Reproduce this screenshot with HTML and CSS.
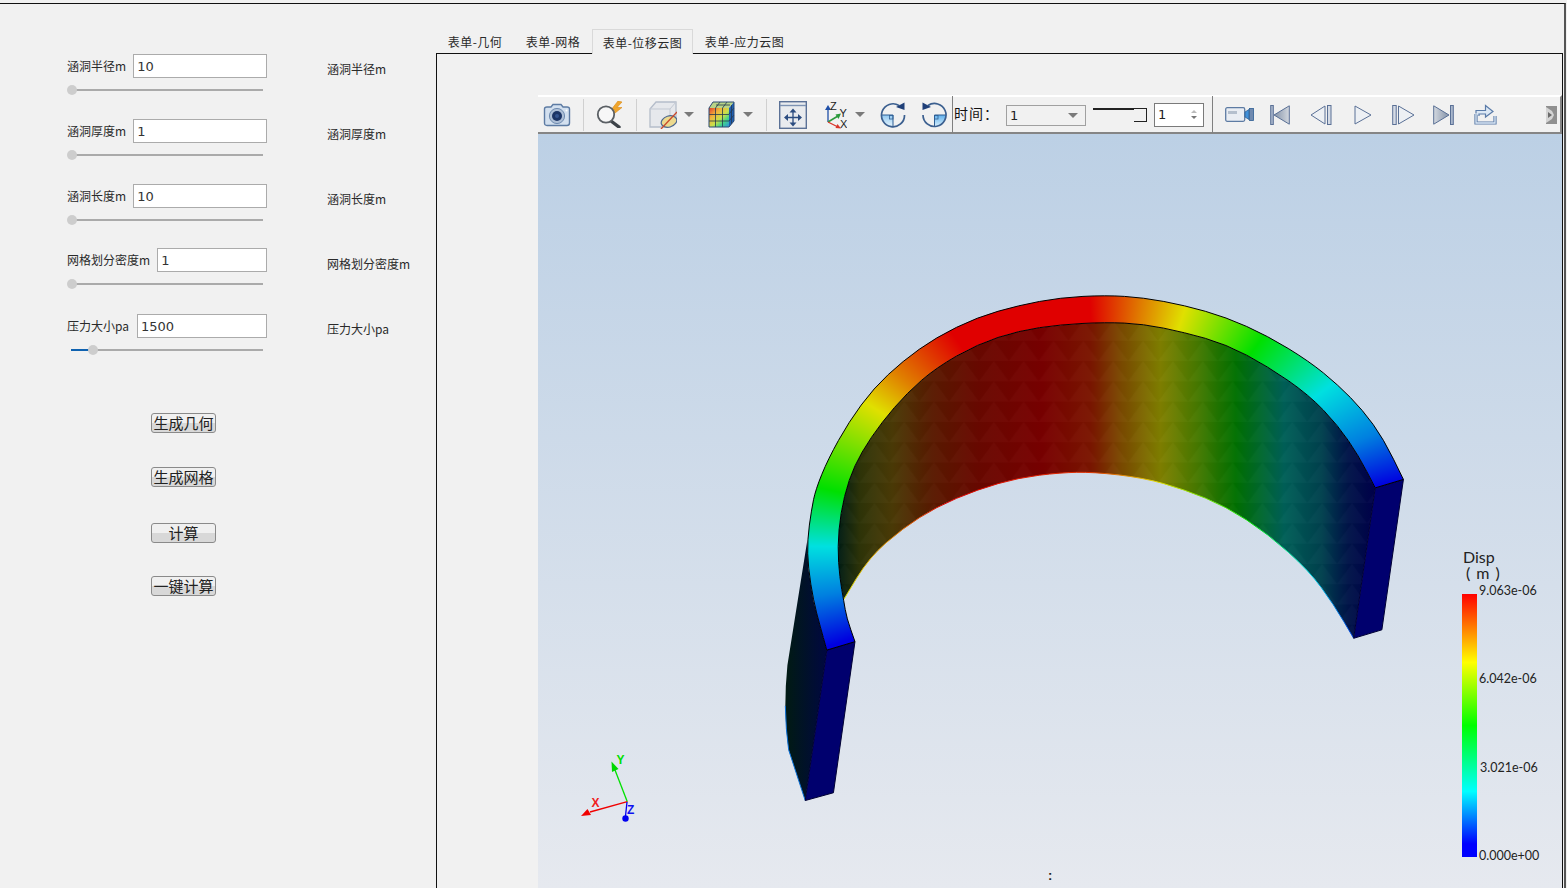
FILE: index.html
```html
<!DOCTYPE html>
<html lang="zh-CN">
<head>
<meta charset="utf-8">
<title>表单</title>
<link rel="stylesheet" href="styles.css">
</head>
<body>
<div class="window">
  <aside class="side">
    <div class="form">
      <div class="field">
        <div class="field-row"><label class="lbl">涵洞半径m</label><div class="input">10</div></div>
        <div class="slider"><span class="handle"></span></div>
      </div>
      <div class="field">
        <div class="field-row"><label class="lbl">涵洞厚度m</label><div class="input">1</div></div>
        <div class="slider"><span class="handle"></span></div>
      </div>
      <div class="field field-short">
        <div class="field-row"><label class="lbl">涵洞长度m</label><div class="input">10</div></div>
        <div class="slider"><span class="handle"></span></div>
      </div>
      <div class="field field-tall">
        <div class="field-row"><label class="lbl">网格划分密度m</label><div class="input">1</div></div>
        <div class="slider"><span class="handle"></span></div>
      </div>
      <div class="field field-last">
        <div class="field-row"><label class="lbl">压力大小pa</label><div class="input input-wide-gap">1500</div></div>
        <div class="slider slider-value"><span class="fill"></span><span class="handle handle-value"></span></div>
      </div>
      <div class="actions">
        <button class="btn">生成几何</button>
        <button class="btn btn-b">生成网格</button>
        <button class="btn btn-c">计算</button>
        <button class="btn btn-d">一键计算</button>
      </div>
    </div>
    <div class="echo">
      <div class="echo-item">涵洞半径m</div>
      <div class="echo-item">涵洞厚度m</div>
      <div class="echo-item">涵洞长度m</div>
      <div class="echo-item">网格划分密度m</div>
      <div class="echo-item">压力大小pa</div>
    </div>
  </aside>

  <main class="main">
    <nav class="tabs">
      <div class="tab">表单-几何</div>
      <div class="tab">表单-网格</div>
      <div class="tab tab-active">表单-位移云图</div>
      <div class="tab tab-wide">表单-应力云图</div>
    </nav>
    <section class="pane">
      <div class="toolbar">
        <svg class="t-camera" width="28" height="24" viewBox="0 0 28 24">
          <path d="M1.5 6Q1.5 4 4 4H8L10 1.5H18L20 4H24Q26.5 4 26.5 6V20Q26.5 22.5 24 22.5H4Q1.5 22.5 1.5 20Z" fill="#d3e0ef" stroke="#5d7ba3" stroke-width="1.4"/>
          <circle cx="14" cy="13" r="7.6" fill="#aebfd6" stroke="#6f8bb0"/>
          <circle cx="14" cy="13" r="5" fill="#1c3566"/>
          <circle cx="14" cy="13" r="2" fill="#34548f"/>
          <circle cx="23.5" cy="7.5" r="1" fill="#fff"/>
        </svg>
        <span class="sep s-a"></span>
        <svg class="t-mag" width="29" height="27" viewBox="0 0 29 27">
          <path d="M22 0L15 9H19L16.5 14L26 6.500H21L26 1Z" fill="#f0a52c" stroke="#d98a18" stroke-width=".6"/>
          <line x1="15" y1="20" x2="23" y2="26" stroke="#3c4248" stroke-width="3.4" stroke-linecap="round"/>
          <circle cx="10" cy="13.500" r="8.200" fill="#f7f7f7" stroke="#5a5f64" stroke-width="1.800"/>
        </svg>
        <span class="sep s-b"></span>
        <svg class="t-box" width="28" height="28" viewBox="0 0 28 28">
          <path d="M1 8L7 1H27V19L21 26H1Z" fill="#e6e8ec" stroke="#b5bdca" stroke-width="1.300"/>
          <path d="M1 8H21V26M21 8L27 1" fill="none" stroke="#c3c9d3" stroke-width="1"/>
          <ellipse cx="20" cy="20.500" rx="8" ry="5.500" transform="rotate(-18 20 20.500)" fill="#ecd98e" stroke="#4d6890" stroke-width="1.200"/>
          <line x1="12" y1="28" x2="28" y2="11" stroke="#c8492d" stroke-width="1.300"/>
        </svg>
        <span class="caret c-a"></span>
        <svg class="t-cube" width="27" height="27" viewBox="0 0 27 27">
          <defs>
            <linearGradient id="cubeFront" x1="0" y1="0" x2="1" y2="1">
              <stop offset="0" stop-color="#e03b2e"/><stop offset=".3" stop-color="#f2b33a"/><stop offset=".55" stop-color="#c9e04a"/><stop offset=".75" stop-color="#42d48a"/><stop offset="1" stop-color="#2f8fe0"/>
            </linearGradient>
          </defs>
          <path d="M5 1H26L21 7H1Z" fill="#b9d487"/>
          <path d="M21 7L26 1V20L21 26Z" fill="#1f5fb0"/>
          <rect x="1" y="7" width="20" height="19" fill="url(#cubeFront)"/>
          <path d="M7.500 7V26M14.500 7V26M1 13.500H21M1 20H21M8 4H22M12 1L7.500 7M19 1L14.500 7M23.500 4V23M21 13L26 7M21 20L26 14" stroke="#24384f" stroke-width=".8" fill="none"/>
          <path d="M5 1H26V20L21 26H1V7Z" fill="none" stroke="#2c4a72" stroke-width="1"/>
        </svg>
        <span class="caret c-b"></span>
        <span class="sep s-c"></span>
        <svg class="t-reset" width="28" height="28" viewBox="0 0 28 28">
          <rect x=".7" y=".7" width="26.600" height="26.600" fill="#e9ebee" stroke="#5b7196" stroke-width="1.400"/>
          <line x1="1" y1="4.500" x2="27" y2="4.500" stroke="#7d92b3" stroke-width="1.400"/>
          <path d="M7.500 16.500H20.500M14 10V23" stroke="#2b4c80" stroke-width="1.300" fill="none"/>
          <path d="M14 7.500L17.500 11.500H10.500Z M14 25.500L10.500 21.500H17.500Z M5 16.500L9 13V20Z M23 16.500L19 20V13Z" fill="#2b4c80"/>
        </svg>
        <svg class="t-axes" width="23" height="28" viewBox="0 0 23 28">
          <line x1="4" y1="21" x2="4" y2="7" stroke="#1f4fa8" stroke-width="1.300"/>
          <path d="M4 4L1 9H7Z" fill="#1f4fa8"/>
          <line x1="4" y1="21" x2="14" y2="15" stroke="#2c9a3c" stroke-width="1.500"/>
          <path d="M17 12.500L11.500 13.500L14.500 18Z" fill="#2c9a3c"/>
          <line x1="4" y1="21" x2="14" y2="26" stroke="#d8372c" stroke-width="1.300"/>
          <path d="M17 27.500L11.500 27L13.500 23Z" fill="#d8372c"/>
          <text x="6" y="8.500" class="axis-letter">Z</text>
          <text x="15.500" y="15.500" class="axis-letter">Y</text>
          <text x="16" y="27" class="axis-letter">X</text>
        </svg>
        <span class="caret c-c"></span>
        <svg class="t-cw" width="26" height="26" viewBox="0 0 26 26">
          <defs>
            <linearGradient id="quad" x1="0" y1="0" x2="0" y2="1">
              <stop offset="0" stop-color="#8fc7f0"/><stop offset="1" stop-color="#e6f4fd"/>
            </linearGradient>
          </defs>
          <path d="M1.500 13H13V24.500A11.500 11.500 0 0 1 1.500 13Z" fill="url(#quad)"/>
          <path d="M1.500 13H13V24.500" fill="none" stroke="#2f5f94" stroke-width="1"/>
          <rect x="9.500" y="13.500" width="3.500" height="3.500" fill="none" stroke="#2f5f94" stroke-width=".8"/>
          <path d="M19 3.500A11.500 11.500 0 1 0 24.500 13" fill="none" stroke="#3b5f8f" stroke-width="1.700"/>
          <path d="M24.500 .500L24.500 8L16 5Z" fill="#1f3f78"/>
        </svg>
        <svg class="t-ccw" width="25" height="26" viewBox="0 0 25 26">
          <defs>
            <linearGradient id="quadB" x1="0" y1="0" x2="0" y2="1">
              <stop offset="0" stop-color="#5fb0ec"/><stop offset="1" stop-color="#d9effc"/>
            </linearGradient>
          </defs>
          <path d="M12.500 13H24A11.500 11.500 0 0 1 12.500 24.500Z" fill="url(#quadB)"/>
          <path d="M24 13H12.500V24.500" fill="none" stroke="#2f5f94" stroke-width="1"/>
          <rect x="12.500" y="13.500" width="3.500" height="3.500" fill="none" stroke="#2f5f94" stroke-width=".8"/>
          <path d="M6 3.500A11.500 11.500 0 1 1 1 13" fill="none" stroke="#3b5f8f" stroke-width="1.700"/>
          <path d="M.5 .500L.5 8L9 5Z" fill="#1f3f78"/>
        </svg>
        <span class="sep sep-dark s-d"></span>
        <span class="time-label">时间：</span>
        <div class="combo"><span>1</span><span class="caret caret-small"></span></div>
        <div class="tslider"><span class="thandle"></span></div>
        <div class="spin"><span>1</span><span class="spin-btns"><i class="up"></i><i class="down"></i></span></div>
        <span class="sep sep-dark s-e"></span>
        <div class="player">
          <svg class="p-video" width="29" height="15" viewBox="0 0 29 15">
            <rect x=".7" y=".7" width="19" height="13.600" rx="1.500" fill="#e9edf3" stroke="#5d7ba3" stroke-width="1.300"/>
            <rect x="3" y="4" width="9" height="3" fill="#b4bfcd"/>
            <path d="M20 5L24 2.500V12.500L20 10Z" fill="#3f8fd8" stroke="#2f5f94" stroke-width=".8"/>
            <rect x="24.500" y="1.500" width="4" height="12" fill="#6f8ab0" stroke="#2f5f94" stroke-width=".8"/>
          </svg>
          <svg class="p-first" width="20" height="20" viewBox="0 0 20 20">
            <defs>
              <linearGradient id="fillL" x1="0" y1="0" x2="1" y2="0"><stop offset="0" stop-color="#8392a8"/><stop offset="1" stop-color="#d3d8df"/></linearGradient>
              <linearGradient id="fillR" x1="0" y1="0" x2="1" y2="0"><stop offset="0" stop-color="#d3d8df"/><stop offset="1" stop-color="#8392a8"/></linearGradient>
            </defs>
            <rect x=".7" y=".5" width="2.600" height="19" fill="#a9b7cc" stroke="#5a7096"/>
            <path d="M19.300 .8V19.200L4 10Z" fill="url(#fillL)" stroke="#5a7096"/>
          </svg>
          <svg class="p-prev" width="22" height="20" viewBox="0 0 22 20">
            <path d="M15 1V19L1 10Z" fill="#edf0f4" stroke="#5a7096"/>
            <rect x="17.500" y=".5" width="3.500" height="19" fill="#d5dbe5" stroke="#5a7096"/>
          </svg>
          <svg class="p-play" width="18" height="20" viewBox="0 0 18 20">
            <path d="M1 1V19L17 10Z" fill="#edf0f4" stroke="#5a7096"/>
          </svg>
          <svg class="p-next" width="23" height="20" viewBox="0 0 23 20">
            <rect x=".7" y=".5" width="3.500" height="19" fill="#d5dbe5" stroke="#5a7096"/>
            <path d="M6.500 1V19L22 10Z" fill="#edf0f4" stroke="#5a7096"/>
          </svg>
          <svg class="p-last" width="21" height="20" viewBox="0 0 21 20">
            <path d="M.7 .8V19.200L16 10Z" fill="url(#fillR)" stroke="#5a7096"/>
            <rect x="17.500" y=".5" width="2.800" height="19" fill="#a9b7cc" stroke="#5a7096"/>
          </svg>
          <svg class="p-export" width="23" height="21" viewBox="0 0 23 21">
            <path d="M2 10V19H21V12" fill="none" stroke="#5a7ba8" stroke-width="3.200"/>
            <path d="M2 10V19H21V12" fill="none" stroke="#dce8f5" stroke-width="1.300"/>
            <path d="M2 9.500V6.500H11.500V1.500L19 7.500L11.500 13V10H5V12" fill="#dce8f5" stroke="#5a7ba8" stroke-width="1.200"/>
          </svg>
          <svg class="p-grip" width="11" height="18" viewBox="0 0 11 18">
            <rect width="11" height="18" fill="#8f8f8f"/>
            <path d="M0 1L6 5L8 9L6 13L0 17Z" fill="#d4d4d4"/>
            <path d="M2 6L6 9L2 12Z" fill="#6a6a6a"/>
          </svg>
        </div>
      </div>

      <div class="viewer">
        <svg class="model" viewBox="0 0 1568 1568" preserveAspectRatio="none">
          <defs>
            <linearGradient id="innerGrad" gradientUnits="userSpaceOnUse" x1="165" y1="0" x2="1460" y2="0">
              <stop offset="0" stop-color="#001c12"/>
              <stop offset=".04" stop-color="#2e3408"/>
              <stop offset=".1" stop-color="#4a3a06"/>
              <stop offset=".18" stop-color="#5a1800"/>
              <stop offset=".26" stop-color="#690800"/>
              <stop offset=".38" stop-color="#780000"/>
              <stop offset=".47" stop-color="#7a1500"/>
              <stop offset=".53" stop-color="#7a4c00"/>
              <stop offset=".6" stop-color="#7f7f00"/>
              <stop offset=".66" stop-color="#4e7a00"/>
              <stop offset=".74" stop-color="#007000"/>
              <stop offset=".83" stop-color="#006058"/>
              <stop offset=".9" stop-color="#00404e"/>
              <stop offset=".95" stop-color="#001348"/>
              <stop offset="1" stop-color="#00004a"/>
            </linearGradient>
            <linearGradient id="sideGrad" gradientUnits="userSpaceOnUse" x1="40" y1="0" x2="135" y2="0">
              <stop offset="0" stop-color="#011a14"/>
              <stop offset="1" stop-color="#000840"/>
            </linearGradient>
            <linearGradient id="rimGrad" gradientUnits="userSpaceOnUse" x1="178" y1="0" x2="1408" y2="0">
              <stop offset="0" stop-color="#e0e000"/>
              <stop offset=".1" stop-color="#e08000"/>
              <stop offset=".2" stop-color="#e00000"/>
              <stop offset=".48" stop-color="#e03000"/>
              <stop offset=".62" stop-color="#e0e000"/>
              <stop offset=".8" stop-color="#00e000"/>
              <stop offset=".91" stop-color="#00e0e0"/>
              <stop offset="1" stop-color="#0040e0"/>
            </linearGradient>
            <pattern id="mesh" patternUnits="userSpaceOnUse" width="72" height="60">
              <path d="M0 60L36 0L72 60Z" fill="#fff" fill-opacity=".018"/>
              <path d="M0 0L36 0L0 60Z M72 0L36 0L72 60Z" fill="#000" fill-opacity=".018"/>
            </pattern>
            <clipPath id="bandClip">
              <path d="M137 1095L128.5 1057.5Q120 1020 112.5 985Q105 950 98.5 900Q92 850 91 810Q90 770 95 725Q100 680 105 650Q110 620 125 575Q140 530 165 475Q190 420 220 370Q250 320 285 280Q320 240 360 205Q400 170 450 140Q500 110 550 92.5Q600 75 650 63.5Q700 52 755 48.5Q810 45 855 48.5Q900 52 950 63.5Q1000 75 1050 92.5Q1100 110 1150 137.5Q1200 165 1250 202.5Q1300 240 1335 275Q1370 310 1400 347.5Q1430 385 1455 427.5Q1480 470 1504 530L1528 590L1460 615L1440 567.5Q1420 520 1395 475Q1370 430 1335 385Q1300 340 1250 297.5Q1200 255 1150 222.5Q1100 190 1050 172.5Q1000 155 950 142.5Q900 130 855 127.5Q810 125 755 128.5Q700 132 650 141Q600 150 550 170Q500 190 450 225Q400 260 365 297.5Q330 335 300 377.5Q270 420 245 465Q220 510 205 550Q190 590 180 640Q170 690 166.5 740Q163 790 165.5 835Q168 880 173 915Q178 950 181.5 975Q185 1000 195 1035L205 1070Z"/>
            </clipPath>
          </defs>
          <path class="inner" d="M1460 615L1440 567.5Q1420 520 1395 475Q1370 430 1335 385Q1300 340 1250 297.5Q1200 255 1150 222.5Q1100 190 1050 172.5Q1000 155 950 142.5Q900 130 855 127.5Q810 125 755 128.5Q700 132 650 141Q600 150 550 170Q500 190 450 225Q400 260 365 297.5Q330 335 300 377.5Q270 420 245 465Q220 510 205 550Q190 590 180 640Q170 690 166.5 740Q163 790 165.5 835Q168 880 173 915L178 945L209 882Q240 820 280 777.5Q320 735 360 703.5Q400 672 450 646Q500 620 550 602.5Q600 585 650 577.5Q700 570 740 569Q780 568 840 576.5Q900 585 950 602.5Q1000 620 1050 645Q1100 670 1150 710Q1200 750 1250 805Q1300 860 1330 910Q1360 960 1384 1010L1408 1060Z"/>
          <path class="inner-mesh" d="M1460 615L1440 567.5Q1420 520 1395 475Q1370 430 1335 385Q1300 340 1250 297.5Q1200 255 1150 222.5Q1100 190 1050 172.5Q1000 155 950 142.5Q900 130 855 127.5Q810 125 755 128.5Q700 132 650 141Q600 150 550 170Q500 190 450 225Q400 260 365 297.5Q330 335 300 377.5Q270 420 245 465Q220 510 205 550Q190 590 180 640Q170 690 166.5 740Q163 790 165.5 835Q168 880 173 915L178 945L209 882Q240 820 280 777.5Q320 735 360 703.5Q400 672 450 646Q500 620 550 602.5Q600 585 650 577.5Q700 570 740 569Q780 568 840 576.5Q900 585 950 602.5Q1000 620 1050 645Q1100 670 1150 710Q1200 750 1250 805Q1300 860 1330 910Q1360 960 1384 1010L1408 1060Z"/>
          <path class="rim" d="M178 945L209 882Q240 820 280 777.5Q320 735 360 703.5Q400 672 450 646Q500 620 550 602.5Q600 585 650 577.5Q700 570 740 569Q780 568 840 576.5Q900 585 950 602.5Q1000 620 1050 645Q1100 670 1150 710Q1200 750 1250 805Q1300 860 1330 910Q1360 960 1384 1010L1408 1060"/>
          <path class="side-face" d="M90 770L92 850L105 950L120 1020L137 1095L85 1540L45 1390Q38 1330 37 1260Q37 1200 42 1140Z"/>
          <path class="side-edge" d="M37 1260Q38 1330 45 1390L85 1540"/>
          <path class="end-face" d="M137 1095L205 1070L153 1517L85 1540Z"/>
          <path class="end-face" d="M1460 615L1528 590L1476 1035L1408 1060Z"/>
          <foreignObject x="0" y="0" width="1568" height="1568" clip-path="url(#bandClip)">
            <div xmlns="http://www.w3.org/1999/xhtml" class="band"></div>
          </foreignObject>
          <path class="edge" d="M137 1095L128.5 1057.5Q120 1020 112.5 985Q105 950 98.5 900Q92 850 91 810Q90 770 95 725Q100 680 105 650Q110 620 125 575Q140 530 165 475Q190 420 220 370Q250 320 285 280Q320 240 360 205Q400 170 450 140Q500 110 550 92.5Q600 75 650 63.5Q700 52 755 48.5Q810 45 855 48.5Q900 52 950 63.5Q1000 75 1050 92.5Q1100 110 1150 137.5Q1200 165 1250 202.5Q1300 240 1335 275Q1370 310 1400 347.5Q1430 385 1455 427.5Q1480 470 1504 530L1528 590L1460 615L1440 567.5Q1420 520 1395 475Q1370 430 1335 385Q1300 340 1250 297.5Q1200 255 1150 222.5Q1100 190 1050 172.5Q1000 155 950 142.5Q900 130 855 127.5Q810 125 755 128.5Q700 132 650 141Q600 150 550 170Q500 190 450 225Q400 260 365 297.5Q330 335 300 377.5Q270 420 245 465Q220 510 205 550Q190 590 180 640Q170 690 166.5 740Q163 790 165.5 835Q168 880 173 915Q178 950 181.5 975Q185 1000 195 1035L205 1070Z"/>
        </svg>

        <svg class="triad" viewBox="560 740 100 90">
          <line x1="627.300" y1="801.700" x2="615" y2="770" stroke="#00e000" stroke-width="1.300"/>
          <path d="M611.500 761.500L612 772L618.500 769Z" fill="#00d800"/>
          <line x1="627.300" y1="801.700" x2="590" y2="812" stroke="#f00000" stroke-width="1.300"/>
          <path d="M581 816L591 815L587.500 809Z" fill="#f00000"/>
          <line x1="627" y1="802" x2="625.500" y2="816" stroke="#0000f0" stroke-width="1.300"/>
          <circle cx="625.500" cy="818.500" r="3.200" fill="#0000f0"/>
          <text x="616.500" y="764" class="tri-y">Y</text>
          <text x="591.500" y="807" class="tri-x">X</text>
          <text x="627" y="813.500" class="tri-z">Z</text>
        </svg>

        <div class="legend">
          <div class="legend-title">Disp<br><span class="legend-unit">( m )</span></div>
          <div class="legend-row">
            <div class="legend-bar"></div>
            <div class="legend-labels">
              <span>9.063e-06</span>
              <span>6.042e-06</span>
              <span class="legend-shift">3.021e-06</span>
              <span>0.000e+00</span>
            </div>
          </div>
        </div>
        <span class="colon">:</span>
      </div>
    </section>
  </main>
</div>
</body>
</html>
```

FILE: styles.css
```css
* { box-sizing: border-box; }
html, body { margin: 0; padding: 0; height: 100%; overflow: hidden; background: #f1f1f1; }
body { font-family: "Noto Sans CJK SC", "Liberation Sans", sans-serif; font-size: 12px; color: #2a2a2a; }

.window {
  display: flex;
  width: 1566px;
  height: 885px;
  margin-top: 3px;
  border-top: 1px solid #111;
  border-right: 2px solid #555;
}

/* left panel */
.side { display: flex; width: 436px; flex: none; padding: 50px 0 0 67px; }
.form { width: 200px; flex: none; }
.field { height: 65px; }
.field-short { height: 64px; }
.field-tall { height: 66px; }
.field-last { height: 99px; }
.field-row { display: flex; align-items: center; gap: 7px; height: 24px; }
.lbl { white-space: nowrap; line-height: 24px; }
.input {
  flex: 1;
  height: 24px;
  padding: 1px 0 0 3px;
  border: 1px solid #ababab;
  background: #fff;
  font: 13px/22px "DejaVu Sans", sans-serif;
  color: #333;
}
.input-wide-gap { margin-left: 1px; }
.slider { position: relative; height: 2px; width: 191px; margin: 11px 0 0 5px; background: #aaa; }
.handle {
  position: absolute;
  left: -5px;
  top: -4px;
  width: 10px;
  height: 10px;
  border-radius: 50%;
  background: #cdcdcd;
}
.handle-value { left: 16px; }
.fill { position: absolute; left: -1px; top: 0; width: 18px; height: 2px; background: #0f62b0; }
.actions { display: flex; flex-direction: column; align-items: flex-start; padding-left: 84px; }
.btn {
  width: 65px;
  height: 20px;
  padding: 0 0 2px;
  border: 1px solid #8a8a8a;
  border-radius: 3px;
  background: linear-gradient(#f0f0f0 0 50%, #d8d8d8 50% 100%);
  font: 15px/15px "Noto Sans CJK SC", sans-serif;
  color: #222;
  white-space: nowrap;
}
.btn-b { margin-top: 34px; }
.btn-c { margin-top: 36px; }
.btn-d { margin-top: 33px; }
.echo { margin-left: 60px; padding-top: 7px; }
.echo-item { height: 65px; line-height: 16px; white-space: nowrap; }

/* right panel */
.main { display: flex; flex-direction: column; flex: 1; min-width: 0; margin-right: 1px; }
.tabs { display: flex; flex: none; height: 50px; padding-top: 25px; position: relative; z-index: 1; }
.tab { width: 78px; height: 25px; line-height: 26px; letter-spacing: .5px; text-align: center; white-space: nowrap; }
.tab-active { width: 101px; border: 1px solid #d9d9d9; border-bottom: 0; background: #f1f1f1; }
.tab-wide { width: 103px; }
.pane {
  display: flex;
  flex-direction: column;
  flex: 1;
  min-height: 0;
  margin-top: -1px;
  padding: 41px 0 0 101px;
  border-top: 1px solid #111;
  border-left: 1px solid #111;
  border-right: 1px solid #111;
}

/* toolbar */
.toolbar {
  display: flex;
  align-items: center;
  flex: none;
  height: 39px;
  border-top: 2px solid #fff;
  border-bottom: 2px solid #858585;
  border-right: 2px solid #858585;
  background: #f1f1f1;
}
.toolbar svg { flex: none; display: block; }
.sep { flex: none; width: 1px; height: 32px; background: #d0d0d0; }
.sep-dark { height: 37px; background: #808080; }
.caret {
  flex: none;
  width: 0;
  height: 0;
  border-left: 5px solid transparent;
  border-right: 5px solid transparent;
  border-top: 5px solid #7a7a7a;
}
.t-camera { margin-left: 5px; }
.s-a { margin-left: 12px; }
.t-mag { margin-left: 12px; }
.s-b { margin-left: 11px; }
.t-box { margin-left: 12px; }
.c-a { margin-left: 7px; }
.t-cube { margin-left: 14px; }
.c-b { margin-left: 8px; }
.s-c { margin-left: 13px; }
.t-reset { margin-left: 12px; }
.t-axes { margin-left: 17px; }
.c-c { margin-left: 8px; }
.t-cw { margin-left: 15px; }
.t-ccw { margin-left: 16px; }
.s-d { margin-left: 5px; }
.axis-letter { font: 11px "Liberation Sans", sans-serif; fill: #222; }
.time-label { flex: none; width: 52px; margin: -3px 0 0 1px; font-size: 14px; letter-spacing: 1px; line-height: 20px; color: #111; }
.combo {
  display: flex;
  align-items: center;
  justify-content: space-between;
  flex: none;
  width: 80px;
  height: 21px;
  margin-top: 1px;
  padding: 0 7px 0 3px;
  border: 1px solid #a0a0a0;
  font: 13px "DejaVu Sans", sans-serif;
  color: #222;
}
.caret-small { border-left-width: 5px; border-right-width: 5px; }
.tslider { position: relative; flex: none; width: 54px; height: 14px; margin: 1px 0 0 7px; border-top: 2px solid #222; }
.thandle {
  position: absolute;
  right: 0;
  top: -1px;
  width: 13px;
  height: 13px;
  border-right: 1px solid #222;
  border-bottom: 1px solid #222;
  background: #f1f1f1;
}
.spin {
  display: flex;
  align-items: center;
  justify-content: space-between;
  flex: none;
  width: 50px;
  height: 24px;
  margin-left: 7px;
  padding: 0 6px 0 3px;
  border: 1px solid #7a7a7a;
  background: #fff;
  font: 13px "DejaVu Sans", sans-serif;
  color: #222;
}
.spin-btns { display: flex; flex-direction: column; gap: 3px; }
.spin-btns i { display: block; width: 0; height: 0; border-left: 3px solid transparent; border-right: 3px solid transparent; }
.spin-btns .up { border-bottom: 3px solid #bbb; }
.spin-btns .down { border-top: 3px solid #777; }
.s-e { margin-left: 8px; }
.player { display: flex; align-items: center; flex: 1; margin-left: 8px; padding-left: 4px; }
.p-first { margin-left: 16px; }
.p-prev { margin-left: 20px; }
.p-play { margin-left: 22px; }
.p-next { margin-left: 20px; }
.p-last { margin-left: 18px; }
.p-export { margin-left: 20px; }
.p-grip { margin-left: 49px; }

/* 3D viewer */
.viewer {
  position: relative;
  flex: 1;
  min-height: 0;
  overflow: hidden;
  background: linear-gradient(#bcd0e5, #e6e9ef);
}
.model { position: absolute; left: 232px; top: 146px; width: 650px; height: 530px; overflow: visible; }
.inner { fill: url(#innerGrad); }
.inner-mesh { fill: url(#mesh); }
.rim { fill: none; stroke: url(#rimGrad); stroke-width: 1; vector-effect: non-scaling-stroke; }
.side-face { fill: url(#sideGrad); }
.side-edge { fill: none; stroke: #0a70d8; stroke-width: 1; vector-effect: non-scaling-stroke; }
.end-face { fill: #00006e; stroke: #000033; stroke-width: 1; vector-effect: non-scaling-stroke; }
.edge { fill: none; stroke: #000; stroke-width: 1; vector-effect: non-scaling-stroke; }
.band {
  width: 1568px;
  height: 1568px;
  background: conic-gradient(from -120deg at 810px 800px,
    #0000e0 0deg, #0000e0 7deg, #0080e0 19deg, #00e0e0 31deg, #00e000 45deg, #e0e000 67deg,
    #e08000 76deg, #e00000 90deg, #e00000 117deg, #e08000 127deg, #e0e000 135deg,
    #00e000 151deg, #00e0e0 168deg, #0080e0 182deg, #0000e0 194deg);
}
.triad { position: absolute; left: 22px; top: 606px; width: 100px; height: 90px; }
.tri-y, .tri-x, .tri-z { font: bold 12px "Liberation Sans", sans-serif; }
.tri-y { fill: #00e000; }
.tri-x { fill: #f02020; }
.tri-z { fill: #1010f0; }
.legend { position: absolute; left: 924px; top: 415px; width: 100px; font-family: "Lato", sans-serif; color: #222; }
.legend-title { height: 34px; padding-left: 1px; font-size: 16px; line-height: 16px; }
.legend-unit { padding-left: 3px; word-spacing: 2px; }
.legend-row { display: flex; }
.legend-bar {
  flex: none;
  width: 15px;
  height: 263px;
  margin-top: 11px;
  background: linear-gradient(#ff0000 0, #ffff00 26%, #00ff00 50%, #00ffff 75%, #0000ff 95%, #0000ff 100%);
}
.legend-labels { display: flex; flex-direction: column; justify-content: space-between; height: 279px; margin: 1px 0 0 2px; font-size: 12.5px; line-height: 14px; white-space: nowrap; }
.legend-shift { padding-left: 1px; }
.colon { position: absolute; left: 510px; top: 734px; font: bold 13px "Liberation Sans", sans-serif; color: #222; }
```
